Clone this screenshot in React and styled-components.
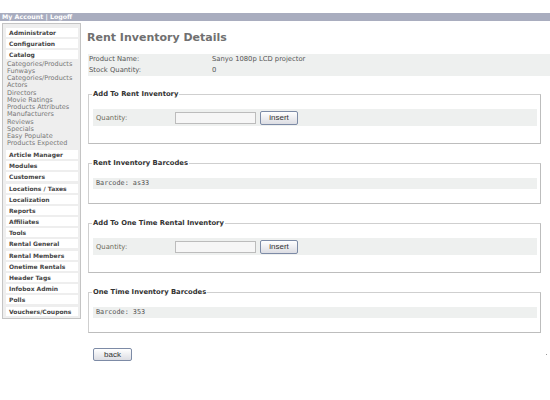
import React from "react";
import styled, { createGlobalStyle } from "styled-components";

const menuTop = ["Administrator", "Configuration"];
const catalogLinks = [
  "Categories/Products",
  "Funways",
  "Categories/Products",
  "Actors",
  "Directors",
  "Movie Ratings",
  "Products Attributes",
  "Manufacturers",
  "Reviews",
  "Specials",
  "Easy Populate",
  "Products Expected",
];
const menuBottom = [
  "Article Manager",
  "Modules",
  "Customers",
  "Locations / Taxes",
  "Localization",
  "Reports",
  "Affiliates",
  "Tools",
  "Rental General",
  "Rental Members",
  "Onetime Rentals",
  "Header Tags",
  "Infobox Admin",
  "Polls",
  "Vouchers/Coupons",
];

const App = () => {
  return (
    <>
      <GlobalStyle />
      <TopBar>My Account | Logoff</TopBar>
      <Layout>
        <Sidebar>
          {menuTop.map((m) => (
            <MenuItem key={m}>{m}</MenuItem>
          ))}
          <MenuItem>Catalog</MenuItem>
          <SubLinks>
            {catalogLinks.map((l, i) => (
              <SubLink key={i}>{l}</SubLink>
            ))}
          </SubLinks>
          {menuBottom.map((m) => (
            <MenuItem key={m}>{m}</MenuItem>
          ))}
        </Sidebar>

        <Main>
          <Title>Rent Inventory Details</Title>
          <InfoTable>
            <InfoRow>
              <span>Product Name:</span>
              <span>Sanyo 1080p LCD projector</span>
            </InfoRow>
            <InfoRow>
              <span>Stock Quantity:</span>
              <span>0</span>
            </InfoRow>
          </InfoTable>

          <Box>
            <Legend>Add To Rent Inventory</Legend>
            <FormRow>
              <Label>Quantity:</Label>
              <TextInput />
              <Button>insert</Button>
            </FormRow>
          </Box>

          <Box $thin>
            <Legend>Rent Inventory Barcodes</Legend>
            <CodeRow>Barcode: as33</CodeRow>
          </Box>

          <Box>
            <Legend>Add To One Time Rental Inventory</Legend>
            <FormRow>
              <Label>Quantity:</Label>
              <TextInput />
              <Button>insert</Button>
            </FormRow>
          </Box>

          <Box $thin>
            <Legend>One Time Inventory Barcodes</Legend>
            <CodeRow>Barcode: 353</CodeRow>
          </Box>

          <Footer>
            <Button $wide>back</Button>
            <Dot />
          </Footer>
        </Main>
      </Layout>
    </>
  );
};

const GlobalStyle = createGlobalStyle`
  body {
    margin: 0;
    background: #fff;
    font-family: "DejaVu Sans", Verdana, sans-serif;
  }
`;

const TopBar = styled.div`
  margin-top: 13px;
  height: 8px;
  line-height: 8px;
  background: #a9adbf;
  color: #fff;
  font-weight: bold;
  font-size: 6.3px;
  padding-left: 2px;
`;

const Layout = styled.div`
  display: flex;
  align-items: flex-start;
  padding-top: 2px;
`;

const Sidebar = styled.div`
  margin-left: 2px;
  width: 72px;
  border: 1px solid #c4c4c4;
  background: #eeeeee;
  padding: 4px 2px 2px 3px;
  display: flex;
  flex-direction: column;
  gap: 2.2px;
`;

const MenuItem = styled.div`
  background: #fff;
  height: 9px;
  line-height: 9px;
  font-size: 6px;
  font-weight: bold;
  color: #454545;
  padding-left: 3px;
  white-space: nowrap;
`;

const SubLinks = styled.div`
  display: flex;
  flex-direction: column;
  margin: -1px 0 0;
  padding-left: 1px;
`;

const SubLink = styled.div`
  font-size: 6.5px;
  line-height: 7.27px;
  color: #777;
  white-space: nowrap;
`;

const Main = styled.div`
  flex: 1;
  margin-left: 7px;
  padding-top: 8px;
  display: flex;
  flex-direction: column;
`;

const Title = styled.h1`
  margin: 0 0 10px -1px;
  font-size: 11px;
  line-height: 13px;
  font-weight: bold;
  color: #707070;
`;

const InfoTable = styled.div`
  background: #eef0ef;
  padding: 0 0 0 1px;
  margin-bottom: 14px;
`;

const InfoRow = styled.div`
  display: grid;
  grid-template-columns: 123px 1fr;
  height: 11px;
  line-height: 11px;
  font-size: 6.8px;
  color: #555;
`;

const Box = styled.fieldset`
  margin: 0 9px 15px 0;
  padding: 11px 3px ${({ $thin }) => ($thin ? "14px" : "17px")} 4px;
  border: 1px solid #cfcfcf;
  border-right-color: #bdbdbd;
  border-bottom-color: #bdbdbd;
`;

const Legend = styled.legend`
  padding: 0 1px;
  margin-left: -1px;
  font-size: 6.8px;
  font-weight: bold;
  color: #333;
`;

const FormRow = styled.div`
  display: flex;
  align-items: center;
  height: 17px;
  background: #eef0ef;
  padding-left: 3px;
`;

const Label = styled.span`
  width: 79px;
  font-size: 6.8px;
  color: #6b6a58;
`;

const TextInput = styled.input.attrs({ type: "text" })`
  box-sizing: border-box;
  width: 81px;
  height: 12px;
  border: 1px solid #bcbcbc;
  background: #f6f6f6;
  padding: 0;
  margin: 0 4px 0 0;
`;

const Button = styled.button`
  box-sizing: border-box;
  width: ${({ $wide }) => ($wide ? "39px" : "38px")};
  height: ${({ $wide }) => ($wide ? "13px" : "14px")};
  padding: 0;
  border: 1px solid #7d8ba6;
  border-radius: 2px;
  background: linear-gradient(#ffffff, #dcdde3);
  font-family: "Liberation Sans", Arial, sans-serif;
  font-size: 8px;
  color: #333;
  line-height: 1;
`;

const CodeRow = styled.div`
  height: 11px;
  line-height: 11px;
  background: #eef0ef;
  padding-left: 3px;
  font-family: "DejaVu Sans Mono", monospace;
  font-size: 6.8px;
  color: #555;
`;

const Footer = styled.div`
  display: flex;
  align-items: center;
  justify-content: space-between;
  padding: 0 3px 0 5px;
`;

const Dot = styled.span`
  width: 1px;
  height: 1px;
  background: #999;
`;

export default App;
